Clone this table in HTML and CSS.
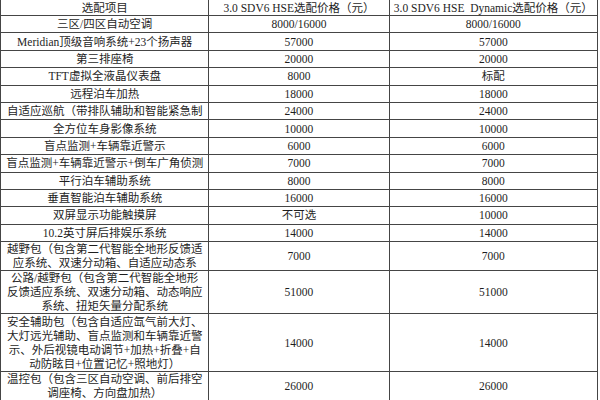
FILE: index.html
```html
<!DOCTYPE html>
<html lang="zh-CN">
<head>
<meta charset="utf-8">
<title>选配价格</title>
<link rel="stylesheet" href="styles.css">
</head>
<body>
<table class="opts">
  <colgroup><col class="c1"><col class="c2"><col class="c3"></colgroup>
  <tr class="head"><td>选配项目</td><td>3.0 SDV6 HSE选配价格（元）</td><td>3.0 SDV6 HSE&nbsp; Dynamic选配价格（元）</td></tr>
  <tr class="r1"><td>三区/四区自动空调</td><td>8000/16000</td><td>8000/16000</td></tr>
  <tr class="r1"><td>Meridian顶级音响系统+23个扬声器</td><td>57000</td><td>57000</td></tr>
  <tr class="r1"><td>第三排座椅</td><td>20000</td><td>20000</td></tr>
  <tr class="r1"><td>TFT虚拟全液晶仪表盘</td><td>8000</td><td>标配</td></tr>
  <tr class="r1"><td>远程泊车加热</td><td>18000</td><td>18000</td></tr>
  <tr class="r1"><td>自适应巡航（带排队辅助和智能紧急制</td><td>24000</td><td>24000</td></tr>
  <tr class="r1"><td>全方位车身影像系统</td><td>10000</td><td>10000</td></tr>
  <tr class="r1"><td>盲点监测+车辆靠近警示</td><td>6000</td><td>6000</td></tr>
  <tr class="r1"><td>盲点监测+车辆靠近警示+倒车广角侦测</td><td>7000</td><td>7000</td></tr>
  <tr class="r1"><td>平行泊车辅助系统</td><td>8000</td><td>8000</td></tr>
  <tr class="r1"><td>垂直智能泊车辅助系统</td><td>16000</td><td>16000</td></tr>
  <tr class="r1"><td>双屏显示功能触摸屏</td><td>不可选</td><td>10000</td></tr>
  <tr class="r1"><td>10.2英寸屏后排娱乐系统</td><td>14000</td><td>14000</td></tr>
  <tr class="r2"><td>越野包（包含第二代智能全地形反馈适<br>应系统、双速分动箱、自适应动态系</td><td>7000</td><td>7000</td></tr>
  <tr class="r3"><td>公路/越野包（包含第二代智能全地形<br>反馈适应系统、双速分动箱、动态响应<br>系统、扭矩矢量分配系统</td><td>51000</td><td>51000</td></tr>
  <tr class="r4"><td>安全辅助包（包含自适应氙气前大灯、<br>大灯远光辅助、盲点监测和车辆靠近警<br>示、外后视镜电动调节+加热+折叠+自<br>动防眩目+位置记忆+照地灯）</td><td>14000</td><td>14000</td></tr>
  <tr class="r2"><td>温控包（包含三区自动空调、前后排空<br>调座椅、方向盘加热）</td><td>26000</td><td>26000</td></tr>
</table>
</body>
</html>
```

FILE: styles.css
```css
html, body {
  margin: 0;
  padding: 0;
  background: #fff;
}

.opts {
  border-collapse: collapse;
  table-layout: fixed;
  width: 598px;
  margin: -1px 0 0 0;
  font-family: "Liberation Serif", "Noto Sans CJK SC", serif;
  font-size: 11.5px;
  line-height: 14px;
  color: #1e1e1e;
}

.c1 { width: 208px; }
.c2 { width: 180px; }
.c3 { width: 208px; }

.opts td {
  border: 1px solid #454545;
  padding: 0;
  text-align: center;
  vertical-align: middle;
  white-space: nowrap;
  overflow: hidden;
}

.head td { height: 15px; }
.r1 td { height: 16.4px; }
.r2 td { height: 28px; }
.r3 td { height: 41.6px; }
.r4 td { height: 57.4px; }
```
